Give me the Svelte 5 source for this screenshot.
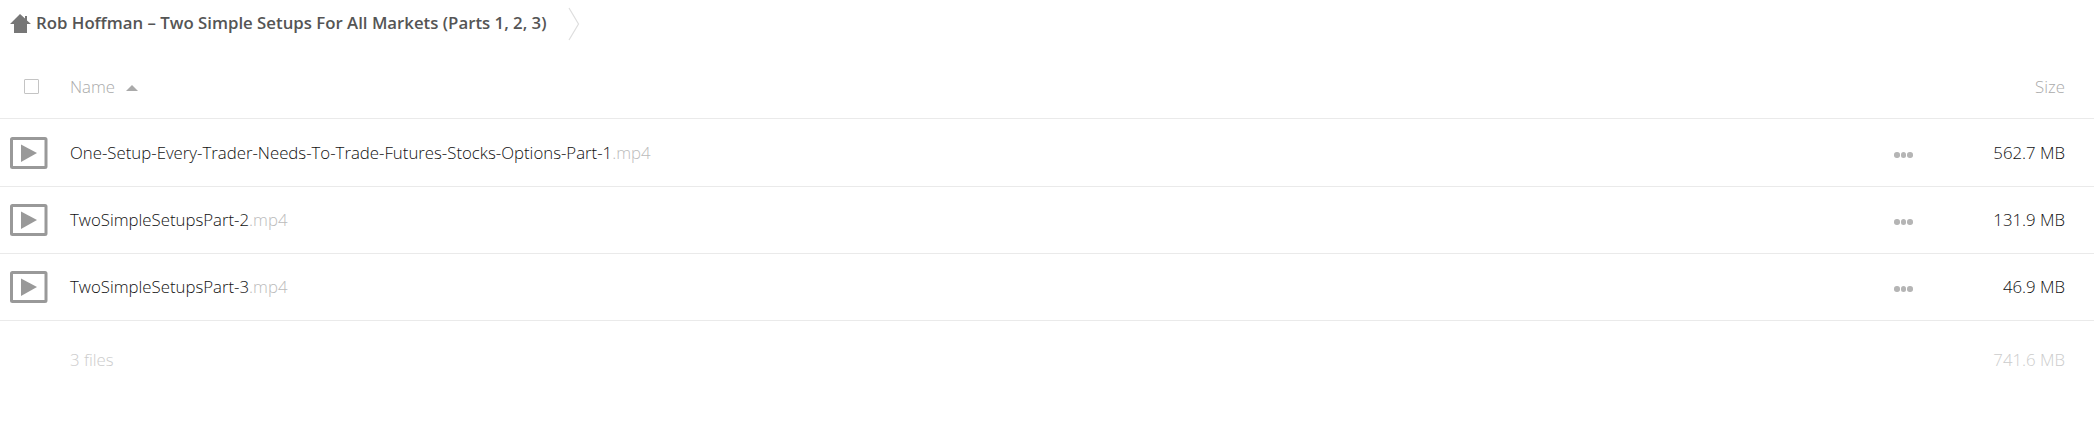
<script>
	const files = [
		{ base: "One-Setup-Every-Trader-Needs-To-Trade-Futures-Stocks-Options-Part-1", ext: ".mp4", size: "562.7 MB" },
		{ base: "TwoSimpleSetupsPart-2", ext: ".mp4", size: "131.9 MB" },
		{ base: "TwoSimpleSetupsPart-3", ext: ".mp4", size: "46.9 MB" }
	];
</script>

<div class="page">
	<div class="crumbs">
		<svg class="home" width="21" height="19" viewBox="0 0 21 19">
			<path d="M10 0 L15 4.5 V2 H17 V6.5 L21 10 H17 V19 H4 V10 H0 Z" fill="#777"/>
		</svg>
		<span class="title">Rob Hoffman – Two Simple Setups For All Markets (Parts 1, 2, 3)</span>
		<svg class="chevron" width="12" height="34" viewBox="0 0 12 34">
			<path d="M1 1 L10.5 17 L1 33" fill="none" stroke="#dedede" stroke-width="1.2"/>
		</svg>
	</div>

	<div class="row head">
		<div class="thumb"><span class="check"></span></div>
		<div class="name">Name <span class="sort"></span></div>
		<div class="size">Size</div>
	</div>

	{#each files as f}
		<div class="row file">
			<div class="thumb">
				<svg width="38" height="32" viewBox="0 0 38 32">
					<rect x="1.5" y="1.5" width="34.5" height="29" fill="#fff" stroke="#999" stroke-width="3" rx="1"/>
					<path d="M11 7.5 L27 16 L11 25 Z" fill="#999"/>
				</svg>
			</div>
			<div class="name">{f.base}<span class="ext">{f.ext}</span></div>
			<div class="more"><i></i><i></i><i></i></div>
			<div class="size">{f.size}</div>
		</div>
	{/each}

	<div class="row summary">
		<div class="thumb"></div>
		<div class="name">3 files</div>
		<div class="size">741.6 MB</div>
	</div>
</div>

<style>
	:global(body) {
		margin: 0;
		background: #fff;
		font-family: "Open Sans", "Liberation Sans", sans-serif;
		font-size: 16.8px;
		font-weight: 300;
		color: #111;
	}

	.crumbs {
		display: flex;
		align-items: center;
		height: 46px;
		padding-left: 10px;
	}
	.home {
		flex: none;
		margin-top: 1px;
	}
	.title {
		margin-left: 5px;
		margin-bottom: 1px;
		font-size: 16.8px;
		font-weight: 600;
		color: #555;
	}
	.chevron {
		margin-left: 21px;
		margin-top: 2px;
	}

	.row {
		display: flex;
		align-items: center;
		box-sizing: border-box;
		height: 67px;
		border-bottom: 1px solid #eaeaea;
	}
	.file {
		padding-bottom: 1px;
	}
	.file:nth-child(3) {
		height: 68px;
		padding-bottom: 0;
	}
	.head {
		height: 73px;
		padding-top: 8px;
		color: #aaa;
	}
	.summary {
		height: 74px;
		padding-top: 3px;
		border-bottom: none;
		color: #ccc;
	}

	.thumb {
		flex: none;
		width: 70px;
		padding-left: 10px;
		box-sizing: border-box;
		display: flex;
		align-items: center;
	}
	.check {
		display: block;
		width: 13px;
		height: 13px;
		margin-left: 14px;
		border: 1px solid #c4c4c4;
		border-radius: 1px;
	}
	.name {
		flex: 1;
		white-space: nowrap;
	}
	.sort {
		display: inline-block;
		width: 0;
		height: 0;
		margin-left: 7px;
		vertical-align: middle;
		border-left: 6px solid transparent;
		border-right: 6px solid transparent;
		border-bottom: 6px solid #aaa;
	}
	.ext {
		color: #bbb;
	}
	.more {
		display: flex;
		gap: 1px;
		width: 20px;
		margin-right: 58px;
		padding-top: 5px;
	}
	.more i {
		display: block;
		width: 5.5px;
		height: 5.5px;
		border-radius: 50%;
		background: #b5b5b5;
	}
	.size {
		flex: none;
		width: 122px;
		padding-right: 29px;
		box-sizing: border-box;
		text-align: right;
		white-space: nowrap;
	}
</style>
